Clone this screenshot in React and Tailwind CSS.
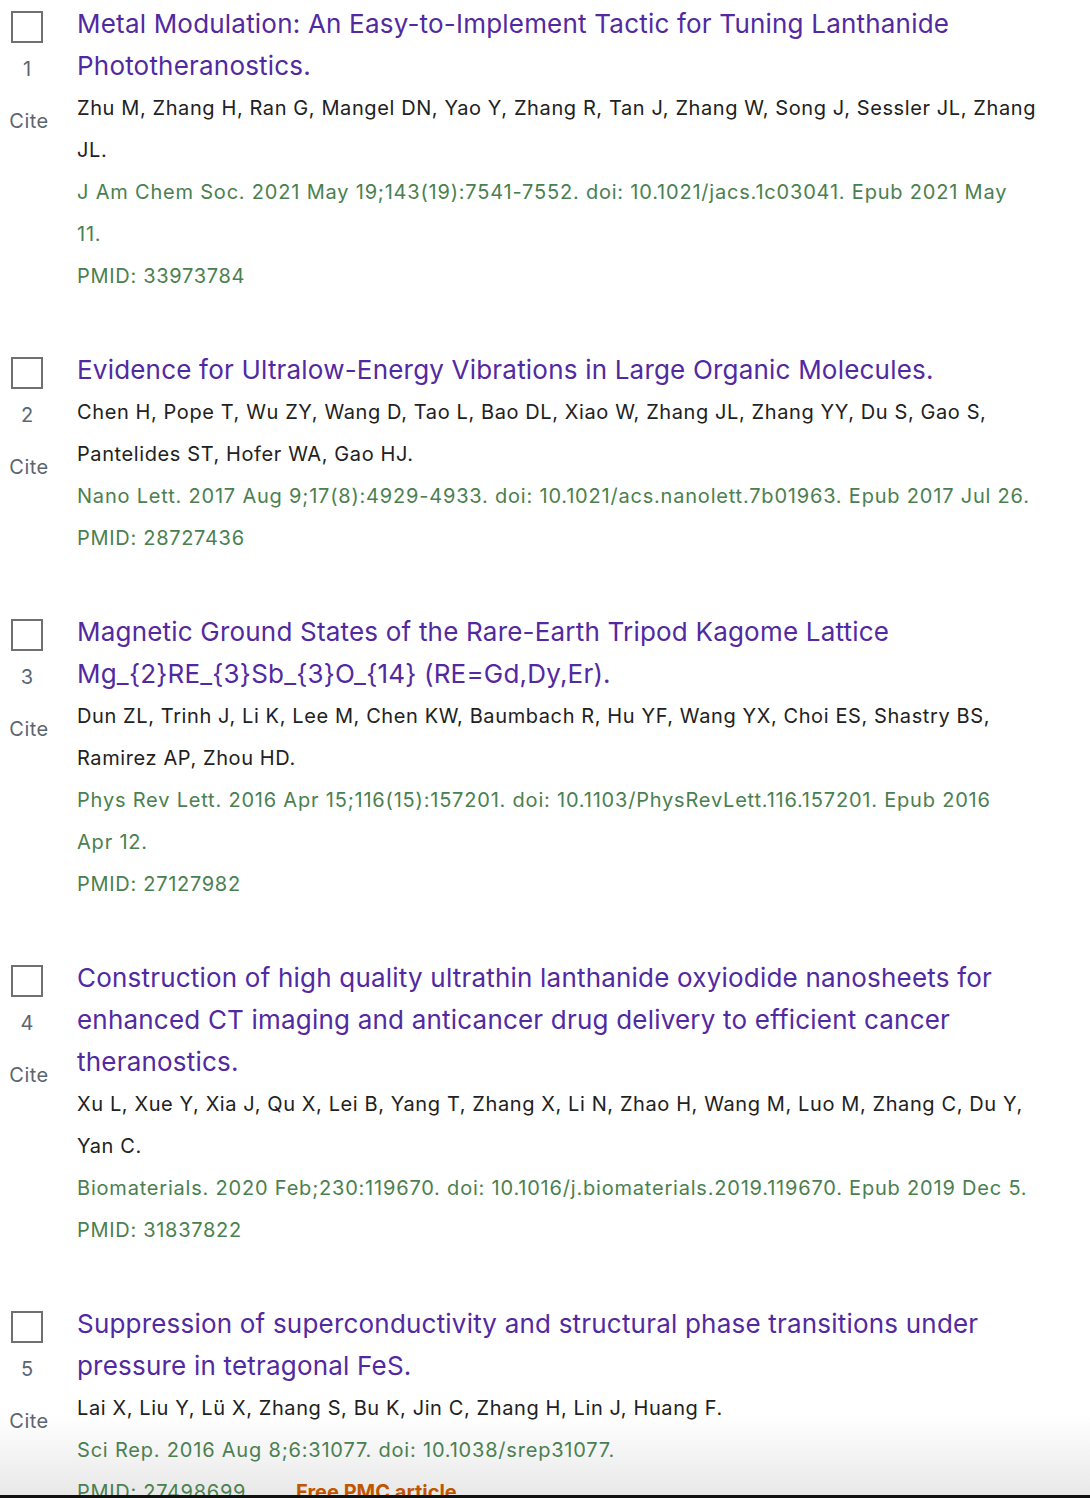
import React from "react";

const items = [
  {
    n: 1,
    title: ["Metal Modulation: An Easy-to-Implement Tactic for Tuning Lanthanide", "Phototheranostics."],
    authors: ["Zhu M, Zhang H, Ran G, Mangel DN, Yao Y, Zhang R, Tan J, Zhang W, Song J, Sessler JL, Zhang", "JL."],
    journal: ["J Am Chem Soc. 2021 May 19;143(19):7541-7552. doi: 10.1021/jacs.1c03041. Epub 2021 May", "11."],
    pmid: "33973784",
  },
  {
    n: 2,
    title: ["Evidence for Ultralow-Energy Vibrations in Large Organic Molecules."],
    authors: ["Chen H, Pope T, Wu ZY, Wang D, Tao L, Bao DL, Xiao W, Zhang JL, Zhang YY, Du S, Gao S,", "Pantelides ST, Hofer WA, Gao HJ."],
    journal: ["Nano Lett. 2017 Aug 9;17(8):4929-4933. doi: 10.1021/acs.nanolett.7b01963. Epub 2017 Jul 26."],
    pmid: "28727436",
  },
  {
    n: 3,
    title: ["Magnetic Ground States of the Rare-Earth Tripod Kagome Lattice", "Mg_{2}RE_{3}Sb_{3}O_{14} (RE=Gd,Dy,Er)."],
    authors: ["Dun ZL, Trinh J, Li K, Lee M, Chen KW, Baumbach R, Hu YF, Wang YX, Choi ES, Shastry BS,", "Ramirez AP, Zhou HD."],
    journal: ["Phys Rev Lett. 2016 Apr 15;116(15):157201. doi: 10.1103/PhysRevLett.116.157201. Epub 2016", "Apr 12."],
    pmid: "27127982",
  },
  {
    n: 4,
    title: [
      "Construction of high quality ultrathin lanthanide oxyiodide nanosheets for",
      "enhanced CT imaging and anticancer drug delivery to efficient cancer",
      "theranostics.",
    ],
    authors: ["Xu L, Xue Y, Xia J, Qu X, Lei B, Yang T, Zhang X, Li N, Zhao H, Wang M, Luo M, Zhang C, Du Y,", "Yan C."],
    journal: ["Biomaterials. 2020 Feb;230:119670. doi: 10.1016/j.biomaterials.2019.119670. Epub 2019 Dec 5."],
    pmid: "31837822",
  },
  {
    n: 5,
    title: ["Suppression of superconductivity and structural phase transitions under", "pressure in tetragonal FeS."],
    authors: ["Lai X, Liu Y, Lü X, Zhang S, Bu K, Jin C, Zhang H, Lin J, Huang F."],
    journal: ["Sci Rep. 2016 Aug 8;6:31077. doi: 10.1038/srep31077."],
    pmid: "27498699",
    free: true,
  },
];

function Lines({ lines }) {
  return lines.map((l, i) => (
    <span key={i} className="block whitespace-nowrap">
      {l}
    </span>
  ));
}

function Result({ item }) {
  return (
    <div className="flex mb-[52px]">
      <div className="w-[54px] shrink-0 flex flex-col items-center pt-[8px]">
        <span className="block w-[32px] h-[32px] border-2 border-[#707070] bg-white" />
        <span className="mt-[14px] text-[20px] leading-[24px] text-[#5c6470]">{item.n}</span>
        <span className="mt-[28px] ml-[4px] text-[20px] leading-[24px] tracking-[0.5px] text-[#5c6470]">Cite</span>
      </div>
      <div className="ml-[23px] flex-1 leading-[42px]">
        <a href="#" className="block text-[26px] tracking-[0.2px] text-[#5229a1]">
          <Lines lines={item.title} />
        </a>
        <div className="text-[20px] tracking-[0.6px] text-[#212121]">
          <Lines lines={item.authors} />
        </div>
        <div className="text-[20px] tracking-[0.8px] text-[#4a8050]">
          <Lines lines={item.journal} />
        </div>
        <div className="text-[20px] tracking-[0.7px] text-[#4a8050] flex">
          <span>PMID: {item.pmid}</span>
          {item.free && <span className="ml-[50px] font-bold tracking-normal text-[#c05600]">Free PMC article.</span>}
        </div>
      </div>
    </div>
  );
}

export default function App() {
  return (
    <div className="relative h-[1498px] overflow-hidden font-['Inter',sans-serif] bg-[linear-gradient(to_bottom,#ffffff_0px,#ffffff_1415px,#e8e8e8_1495px)]">
      <div className="pt-[3px]">
        {items.map((item) => (
          <Result key={item.n} item={item} />
        ))}
      </div>
      <div className="absolute left-0 right-0 bottom-0 h-[3px] bg-[#111]" />
    </div>
  );
}
